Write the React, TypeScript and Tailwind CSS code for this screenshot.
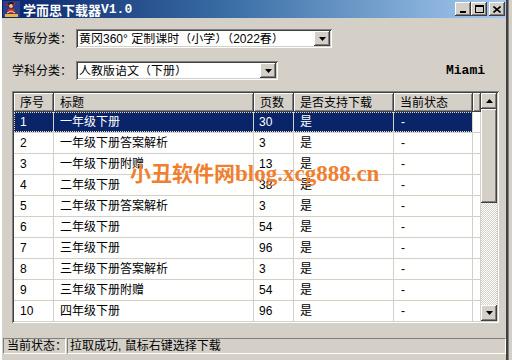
import React from "react";

const rows: string[][] = [
  ["1", "一年级下册", "30", "是", "-"],
  ["2", "一年级下册答案解析", "3", "是", "-"],
  ["3", "一年级下册附赠", "13", "是", "-"],
  ["4", "二年级下册", "38", "是", "-"],
  ["5", "二年级下册答案解析", "3", "是", "-"],
  ["6", "二年级下册", "54", "是", "-"],
  ["7", "三年级下册", "96", "是", "-"],
  ["8", "三年级下册答案解析", "3", "是", "-"],
  ["9", "三年级下册附赠", "54", "是", "-"],
  ["10", "四年级下册", "96", "是", "-"],
];

const raised =
  "shadow-[inset_-1px_-1px_#404040,inset_1px_1px_#ffffff,inset_-2px_-2px_#808080,inset_2px_2px_#D4D0C8]";
const sunken =
  "shadow-[inset_1px_1px_#808080,inset_-1px_-1px_#ffffff,inset_2px_2px_#404040,inset_-2px_-2px_#D4D0C8]";

function DownArrow() {
  return (
    <svg width="7" height="4" viewBox="0 0 7 4">
      <path d="M0 0h7L3.5 4z" fill="#000" />
    </svg>
  );
}
function UpArrow() {
  return (
    <svg width="7" height="4" viewBox="0 0 7 4">
      <path d="M0 4h7L3.5 0z" fill="#000" />
    </svg>
  );
}

function Combo({ text, width }: { text: string; width: string }) {
  return (
    <div className={`${width} h-[19px] bg-white flex items-center ${sunken} pl-[3px] pr-[2px]`}>
      <span className="flex-1 text-[12px] leading-none text-black whitespace-nowrap overflow-hidden">{text}</span>
      <div className={`w-[16px] h-[15px] bg-[#D4D0C8] flex items-center justify-center ${raised}`}>
        <DownArrow />
      </div>
    </div>
  );
}

const colW = ["w-[40px]", "w-[200px]", "w-[40px]", "w-[100px]", "w-[79px]", "w-[8px]"];
const headers = ["序号", "标题", "页数", "是否支持下载", "当前状态", ""];

export default function App() {
  return (
    <div className="w-[512px] h-[360px] flex bg-[#D4D0C8] overflow-hidden font-['Liberation_Sans','Noto_Sans_CJK_SC',sans-serif] text-black">
      <div className="w-[506px] h-full flex flex-col border-l-[2px] border-[#ffffff]">
        {/* Title bar */}
        <div className="h-[18px] flex items-center bg-[linear-gradient(to_right,#0A246A,#3A6EA5_45%,#A6CAF0)] pl-[1px] pr-[1px]">
          <svg width="17" height="16" viewBox="0 0 17 16" className="mr-[3px]">
            <rect x="0" y="0" width="17" height="16" fill="#2b3f8a" />
            <circle cx="8" cy="4" r="3" fill="#1a1a1a" />
            <circle cx="8" cy="5" r="2" fill="#f0c090" />
            <path d="M3 3l3 2M12 2l-2 3" stroke="#c02020" strokeWidth="1.5" />
            <path d="M5 8h6l1 4H4z" fill="#d03020" />
            <path d="M2 13h13v3H2z" fill="#f0b040" />
            <path d="M4 12l4-2 4 2" stroke="#ffe080" strokeWidth="1" fill="none" />
          </svg>
          <span className="text-white font-bold text-[13px] leading-none font-['Noto_Sans_CJK_SC',sans-serif]">学而思下载器</span>
          <span className="text-white font-bold text-[13px] leading-none font-['Liberation_Mono',monospace]">V1.0</span>
          <div className="flex-1" />
          <div className={`w-[16px] h-[14px] bg-[#D4D0C8] ${raised} flex items-end justify-center pb-[3px] pr-[1px]`}>
            <div className="w-[6px] h-[2px] bg-black" />
          </div>
          <div className={`w-[16px] h-[14px] bg-[#D4D0C8] ${raised} flex items-center justify-center`}>
            <div className="w-[9px] h-[8px] border border-black border-t-2" />
          </div>
          <div className={`ml-[2px] w-[16px] h-[14px] bg-[#D4D0C8] ${raised} flex items-center justify-center`}>
            <svg width="8" height="7" viewBox="0 0 8 7">
              <path d="M0.5 0.5L7.5 6.5M7.5 0.5L0.5 6.5" stroke="#000" strokeWidth="1.6" />
            </svg>
          </div>
        </div>

        {/* Body */}
        <div className="flex-1 flex flex-col text-[12px]">
          <div className="mt-[11px] h-[19px] flex items-center">
            <span className="ml-[10px] w-[64px] leading-none">专版分类：</span>
            <Combo text="黄冈360° 定制课时（小学）（2022春）" width="w-[256px]" />
          </div>
          <div className="mt-[13px] h-[19px] flex items-center">
            <span className="ml-[10px] w-[64px] leading-none">学科分类：</span>
            <Combo text="人教版语文（下册）" width="w-[202px]" />
            <div className="flex-1" />
            <span className="mr-[21px] font-bold text-[13px] leading-none font-['Liberation_Mono',monospace]">Miami</span>
          </div>

          {/* List view */}
          <div className={`mt-[11px] ml-[10px] w-[487px] h-[232px] p-[2px] bg-white ${sunken} relative`}>
            <div className="flex h-full">
              <div className="flex flex-col w-[467px] overflow-hidden">
                <div className="flex h-[19px] shrink-0">
                  {headers.map((h, i) => (
                    <div
                      key={i}
                      className={`${colW[i]} shrink-0 h-full bg-[#D4D0C8] ${raised} flex items-center pl-[6px] leading-none whitespace-nowrap`}
                    >
                      {h}
                    </div>
                  ))}
                </div>
                {rows.map((r, ri) => {
                  const sel = ri === 0;
                  return (
                    <div key={ri} className="flex h-[21px] shrink-0 relative">
                      {r.concat([""]).map((c, ci) => (
                        <div
                          key={ci}
                          className={`${colW[ci]} shrink-0 h-full flex items-center ${ci === 2 ? "pl-[5px]" : ci === 4 ? "pl-[7px]" : "pl-[6px]"} whitespace-nowrap leading-none border-b border-r border-[#D4D0C8] ${
                            sel && ci < 5 ? "bg-[#0A246A] text-white" : "bg-white text-black"
                          }`}
                        >
                          {c}
                        </div>
                      ))}
                      {sel && (
                        <div className="absolute left-0 top-0 w-[459px] h-[20px] border border-dotted border-[#E8E0B0]" />
                      )}
                    </div>
                  );
                })}
              </div>
              {/* Scrollbar */}
              <div className="w-[16px] h-full flex flex-col">
                <div className={`h-[16px] w-[16px] bg-[#D4D0C8] ${raised} flex items-center justify-center`}>
                  <UpArrow />
                </div>
                <div className={`h-[94px] bg-[#D4D0C8] ${raised}`} />
                <div className="flex-1 bg-[repeating-conic-gradient(#D4D0C8_0%_25%,#ffffff_0%_50%)] bg-[length:2px_2px]" />
                <div className={`h-[16px] w-[16px] bg-[#D4D0C8] ${raised} flex items-center justify-center`}>
                  <DownArrow />
                </div>
              </div>
            </div>
            <div className="absolute left-[118px] top-[71px] whitespace-nowrap text-[#F07F30] font-bold leading-none">
              <span className="text-[21px] font-['Noto_Sans_CJK_SC',serif]">小丑软件网</span>
              <span className="text-[23px] font-['Liberation_Serif',serif]">blog.xcg888.cn</span>
            </div>
          </div>

          {/* Status bar */}
          <div className="mt-[15px] h-[16px] flex">
            <div className="ml-[1px] w-[63px] h-full border border-t-[#808080] border-l-[#808080] border-b-white border-r-white flex items-center pl-[3px] leading-none whitespace-nowrap">
              当前状态：
            </div>
            <div className="ml-[1px] w-[440px] h-full border border-t-[#808080] border-l-[#808080] border-b-white border-r-white flex items-center pl-[2px] leading-none whitespace-nowrap">
              拉取成功, 鼠标右键选择下载
            </div>
          </div>
          <div className="flex-1" />
        </div>
      </div>
      <div className="w-[2px] h-full bg-[#404040]" />
      <div className="w-[4px] h-full bg-[#D4D0C8] border-l border-[#808080]" />
    </div>
  );
}
